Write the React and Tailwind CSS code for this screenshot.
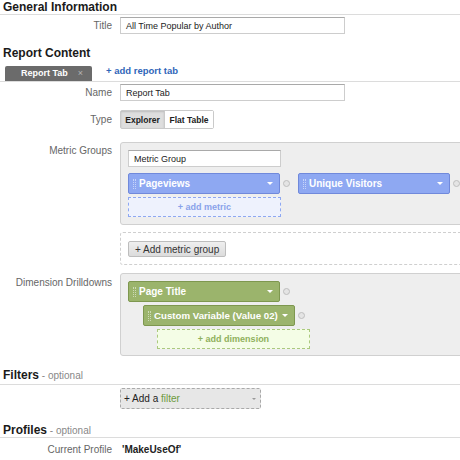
const Heading = ({ title, note, className }) => (
  <div className={`pl-[3px] border-b border-[#dcdcdc] text-[12px] leading-[14px] font-bold text-[#1a1a1a] ${className}`}>
    {title}
    {note && <span className="font-normal text-[10px] text-[#888]"> - {note}</span>}
  </div>
);

const Row = ({ label, top, className, children }) => (
  <div className={`flex ${top ? 'items-start' : 'items-center'} ${className}`}>
    <div className={`w-[112px] shrink-0 text-right text-[10px] leading-[12px] text-[#666] ${top}`}>{label}</div>
    <div className="ml-[8px] flex-1 text-[10px] leading-[12px]">{children}</div>
  </div>
);

const Input = ({ value, width }) => (
  <div className={`h-[17px] ${width} flex items-center pl-[5px] bg-white border border-[#cdcdcd] border-t-[#a9a9a9] text-[9px] text-[#222]`}>
    {value}
  </div>
);

const Grip = () => (
  <span className="flex gap-[1px] ml-[4px] mr-[3px] h-[10px]">
    <span className="h-full border-l border-dotted border-white/50" />
    <span className="h-full border-l border-dotted border-white/50" />
  </span>
);

const Knob = () => (
  <span className="w-[7px] h-[7px] rounded-full border border-[#bdbdbd] bg-[#e4e4e4] shrink-0" />
);

const Chip = ({ label, tone, tight }) => (
  <div className="flex items-center gap-[3px]">
    <div
      className={`flex items-center h-[21px] w-[152px] rounded-[2px] border text-white font-bold ${
        tight ? 'text-[9.7px]' : 'text-[10px]'
      } ${tone === 'blue' ? 'bg-[#8ea8f2] border-[#7089db]' : 'bg-[#9bb46c] border-[#7e974f]'}`}
    >
      <Grip />
      <span className="flex-1 whitespace-nowrap">{label}</span>
      <span className="mr-[6px] w-0 h-0 border-x-[3px] border-x-transparent border-t-[3px] border-t-white" />
    </div>
    <Knob />
  </div>
);

export default function App() {
  return (
    <div className="w-[460px] h-[460px] overflow-hidden bg-white font-['Liberation_Sans',Arial,sans-serif]">
      <Heading title="General Information" className="h-[15px]" />
      <Row label="Title" className="mt-[2px]">
        <Input value="All Time Popular by Author" width="w-[225px]" />
      </Row>

      <Heading title="Report Content" className="mt-[12px] border-b-0 h-[14px]" />
      <div className="mt-[4px] flex items-end border-b border-[#dcdcdc] pl-[5px]">
        <div className="h-[15px] w-[87px] flex items-center bg-[#6b6b6b] rounded-t-[2px] pl-[16px] text-[9px] font-bold text-white">
          <span className="flex-1">Report Tab</span>
          <span className="mr-[9px] text-[#b5b5b5] font-normal text-[9px]">×</span>
        </div>
        <span className="ml-[14px] mb-[3px] text-[9.5px] font-bold text-[#2f66b9]">+ add report tab</span>
      </div>
      <Row label="Name" className="mt-[2px]">
        <Input value="Report Tab" width="w-[225px]" />
      </Row>
      <Row label="Type" className="mt-[9px]">
        <div className="flex w-fit h-[19px] rounded-[2px] border border-[#cacaca] text-[8.5px] font-bold text-[#222]">
          <span className="w-[44px] flex items-center justify-center bg-[#dedede] shadow-[inset_0_1px_2px_rgba(0,0,0,0.15)] border-r border-[#cacaca]">Explorer</span>
          <span className="w-[48px] flex items-center justify-center bg-white">Flat Table</span>
        </div>
      </Row>

      <Row label="Metric Groups" top="pt-[3px]" className="mt-[13px]">
        <div className="w-[360px] h-[83px] rounded-[3px] border border-[#d0d0d0] bg-[#eeeeee] pl-[7px] pt-[7px]">
          <Input value="Metric Group" width="w-[153px]" />
          <div className="mt-[6px] flex gap-[8px]">
            <Chip label="Pageviews" tone="blue" />
            <Chip label="Unique Visitors" tone="blue" />
          </div>
          <div className="mt-[3px] h-[20px] w-[153px] flex items-center justify-center border border-dashed border-[#8ea8f2] bg-[#eef2fd] text-[9px] font-bold text-[#89a2ea]">
            + add metric
          </div>
        </div>
      </Row>
      <div className="mt-[7px] ml-[120px] w-[360px] h-[33px] rounded-[3px] border border-dashed border-[#cfcfcf] pl-[7px] pt-[8px]">
        <div className="w-fit h-[16px] px-[6px] flex items-center rounded-[2px] border border-[#bdbdbd] bg-gradient-to-b from-[#efefef] to-[#dcdcdc] text-[10px] text-[#333]">
          + Add metric group
        </div>
      </div>

      <Row label="Dimension Drilldowns" top="pt-[4px]" className="mt-[8px]">
        <div className="w-[360px] h-[83px] rounded-[3px] border border-[#d0d0d0] bg-[#eeeeee] pl-[7px] pt-[7px]">
          <Chip label="Page Title" tone="green" />
          <div className="mt-[3px] ml-[15px]">
            <Chip label="Custom Variable (Value 02)" tone="green" tight />
          </div>
          <div className="mt-[3px] ml-[29px] h-[20px] w-[153px] flex items-center justify-center border border-dashed border-[#abc97e] bg-[#f4fde6] text-[9px] font-bold text-[#8fb05c]">
            + add dimension
          </div>
        </div>
      </Row>

      <Heading title="Filters" note="optional" className="mt-[12px] h-[17px]" />
      <div className="mt-[3px] ml-[120px] w-[141px] h-[21px] flex items-center rounded-[2px] border border-dashed border-[#a9a9a9] bg-[#e7e7e7] pl-[3px] text-[10px] text-[#222]">
        <span className="flex-1">
          + Add a <span className="text-[#6c9a3c]">filter</span>
        </span>
        <span className="mr-[4px] w-0 h-0 border-x-[2px] border-x-transparent border-t-[2px] border-t-[#999]" />
      </div>

      <Heading title="Profiles" note="optional" className="mt-[14px] h-[15px]" />
      <Row label="Current Profile" className="mt-[6px]">
        <span className="ml-[2px] font-bold text-[#222]">'MakeUseOf'</span>
      </Row>
    </div>
  );
}
